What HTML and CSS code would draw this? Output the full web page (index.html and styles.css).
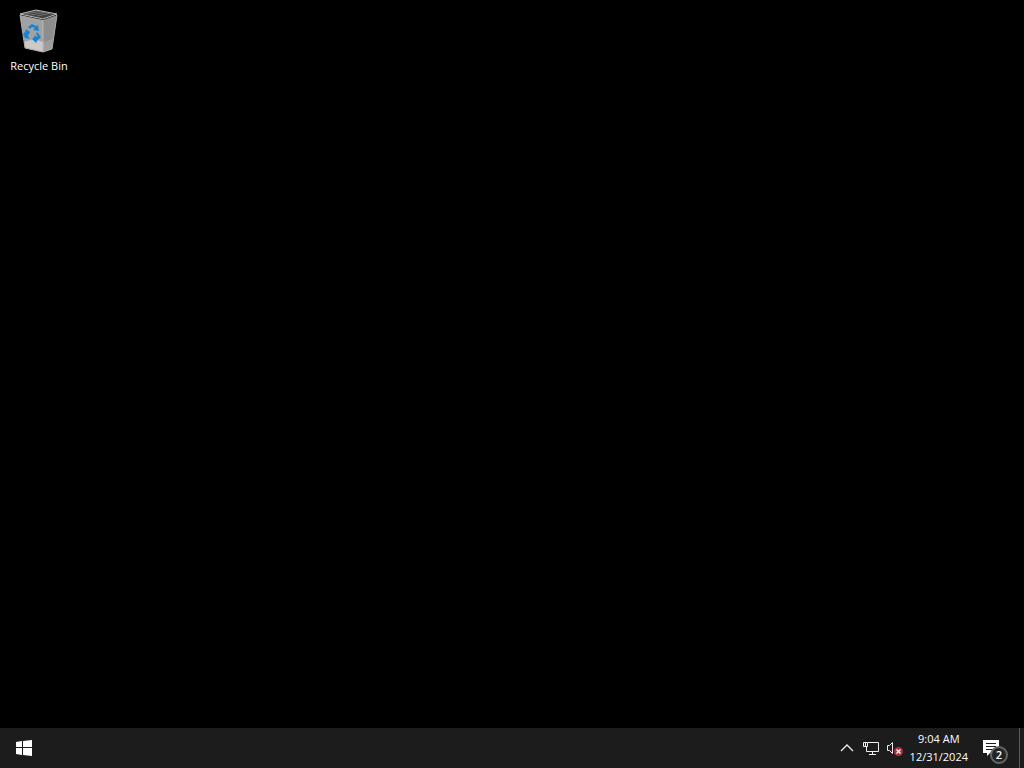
FILE: index.html
```html
<!DOCTYPE html>
<html lang="en">
<head>
<meta charset="utf-8">
<meta name="viewport" content="width=device-width, initial-scale=1">
<title>Desktop</title>
<link rel="stylesheet" href="styles.css">
</head>
<body>
<main class="desktop">
  <button class="shortcut" type="button">
    <svg class="bin-icon" viewBox="0 0 48 48" aria-hidden="true">
      <path d="M5 8 28 13V45L10 41z" fill="#a2a2a2"/>
      <path d="M28 13 42 8 37 42 28 45z" fill="#8d8d8d"/>
      <path d="M9 35 19 32 28 35V45L10 41z" fill="#cccac6"/>
      <path d="M28 35 38 32 37 42 28 45z" fill="#9e9e9e"/>
      <path d="M5 7 21 3 42 7 28 12z" fill="#444" stroke="#bdbdbd"/>
      <path d="M11 7 26 4M16 8 31 5M22 9 36 6" stroke="#707070" fill="none"/>
      <path d="M5 8 10 41 28 45 37 42 42 8" fill="none" stroke="#aaa"/>
      <path d="M28 13V45" stroke="#b8b8b8"/>
      <path d="m13 20 4-3 4 2 2-1 1 6-6-1 2-2-3-1-2 2zM11 22l4 3-2 4 2 3-5-1-2-4 2-2zM22 25l4 5-4 4-1 2-4-4 4-4v2l2-1-2-2z" fill="#1684d6"/>
    </svg>
    <span>Recycle Bin</span>
  </button>
</main>
<footer class="taskbar">
  <button class="start" type="button" aria-label="Start">
    <svg class="icon" viewBox="0 0 16 16" aria-hidden="true"><path d="M0 2 6 1v6H0zM7 1l9-1v7H7zM0 8h6v7l-6-1zM7 8h9v8l-9-1z" fill="#fff"/></svg>
  </button>
  <div class="tray">
    <button class="tray-button" type="button" aria-label="Show hidden icons">
      <svg class="icon" viewBox="0 0 16 16" aria-hidden="true"><path d="m2 11 6-6 6 6" fill="none" stroke="#eee" stroke-width="1.3"/></svg>
    </button>
    <button class="tray-button" type="button" aria-label="Network">
      <svg class="icon" viewBox="0 0 16 16" aria-hidden="true"><path d="M5 2.500h10.500v9H3.500V6M9.500 12v2.500M6 14.500h7M.5 2.500h4v4h-4zM2.500 3v3" fill="none" stroke="#eee"/></svg>
    </button>
    <button class="tray-button" type="button" aria-label="Volume unavailable">
      <svg class="icon" viewBox="0 0 16 16" aria-hidden="true"><path d="M.5 5.500h2l3-3v11l-3-3h-2z" fill="none" stroke="#eee"/><circle cx="11.500" cy="11.500" r="4.500" fill="#b52c3c"/><path d="m9.500 9.500 4 4m0-4-4 4" stroke="#fff" stroke-width="1.300"/></svg>
    </button>
    <button class="clock" type="button"><span>9:04 AM</span><span>12/31/2024</span></button>
    <button class="notifications" type="button" aria-label="2 notifications">
      <svg class="icon" viewBox="0 0 16 16" aria-hidden="true"><path d="M0 0h16v13H7l-3 3v-3H0z" fill="#fff"/><path d="M3 3.500h10M3 6.500h10M3 9.500h7" stroke="#1c1c1c"/></svg>
      <span class="badge">2</span>
    </button>
    <button class="show-desktop" type="button" aria-label="Show desktop"></button>
  </div>
</footer>
</body>
</html>
```
FILE: styles.css
```css
* { box-sizing: border-box; }

body {
  margin: 0;
  min-height: 100vh;
  display: flex;
  flex-direction: column;
  background: #000;
  color: #fff;
  font: 11px/18px "Open Sans", "Noto Sans", sans-serif;
}

button {
  margin: 0;
  padding: 0;
  border: 0;
  background: none;
  color: inherit;
  font: inherit;
}

.desktop { flex: 1; padding: 7px 1px; }

.shortcut {
  display: flex;
  flex-direction: column;
  align-items: center;
  width: 76px;
  gap: 2px;
}

.bin-icon { display: block; width: 48px; height: 48px; }

.taskbar {
  display: flex;
  justify-content: space-between;
  height: 40px;
  background: #1c1c1c;
}

.icon { display: block; width: 16px; height: 16px; flex: none; }

.start {
  display: flex;
  align-items: center;
  justify-content: center;
  width: 48px;
}

.tray { display: flex; }

.tray-button {
  display: flex;
  align-items: center;
  justify-content: center;
  width: 24px;
}

.clock {
  display: flex;
  flex-direction: column;
  align-items: center;
  justify-content: center;
  padding: 0 6px 0 3px;
}

.notifications {
  position: relative;
  display: flex;
  align-items: center;
  justify-content: center;
  width: 34px;
}

.badge {
  position: absolute;
  left: 16px;
  top: 18px;
  width: 18px;
  height: 18px;
  border: 2px solid #666;
  border-radius: 50%;
  background: #242424;
  font-weight: 600;
  line-height: 14px;
  text-align: center;
}

.show-desktop {
  width: 5px;
  margin-left: 11px;
  border-left: 1px solid #5a5a5a;
}
```
